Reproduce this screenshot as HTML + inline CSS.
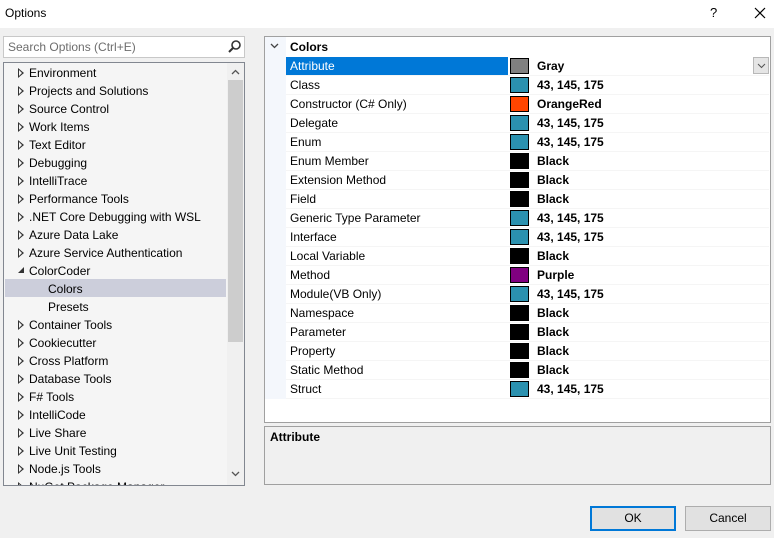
<!DOCTYPE html>
<html><head><style>
*{margin:0;padding:0;box-sizing:border-box}
body{width:774px;height:538px;background:#f0f0f0;font-family:"Liberation Sans",sans-serif;font-size:12px;color:#000;position:relative;overflow:hidden}
.a{position:absolute}
.tb{left:0;top:0;width:774px;height:28px;background:#fff}
.tr{position:absolute;left:5px;width:221px;height:18px;line-height:18px;white-space:nowrap}
.tri{position:absolute;left:10px;top:4px;width:0;height:0;border-left:6px solid #333;border-top:5px solid transparent;border-bottom:5px solid transparent}
.tri:after{content:"";position:absolute;left:-5px;top:-3px;border-left:3.5px solid #f5f5f5;border-top:3px solid transparent;border-bottom:3px solid transparent}
.gr{position:absolute;left:286px;width:483px;height:19px;line-height:18px;border-bottom:1px solid #f5f5f5}
.gr .n{position:absolute;left:0;width:222px;padding-left:4px;height:18px}
.gr .s{position:absolute;left:224px;top:1px;width:19px;height:16px;border:1px solid #000}
.gr .v{position:absolute;left:251px;font-weight:bold}
.btn{position:absolute;top:506px;height:25px;width:86px;background:#e1e1e1;border:1px solid #adadad;text-align:center;line-height:23px}
</style></head><body>
<div class="a tb"></div>
<div class="a" style="left:5px;top:6px">Options</div>
<div class="a" style="left:710px;top:5px;font-size:13px">?</div>
<svg class="a" style="left:754px;top:7px" width="12" height="12"><path d="M1 1L11 11M11 1L1 11" stroke="#000" stroke-width="1.2"/></svg>

<div class="a" style="left:3px;top:36px;width:242px;height:22px;background:#fff;border:1px solid #c8c8c8"></div>
<div class="a" style="left:8px;top:40px;color:#6d6d6d">Search Options (Ctrl+E)</div>
<svg class="a" style="left:227px;top:39px" width="15" height="15"><circle cx="9" cy="6" r="4" fill="none" stroke="#333" stroke-width="1.6"/><path d="M6 9L2 13" stroke="#333" stroke-width="2"/></svg>

<div class="a" style="left:3px;top:62px;width:242px;height:424px;background:#f5f5f5;border:1px solid #828790;overflow:hidden">
<div class="a" style="left:223px;top:0;width:17px;height:422px;background:#f0f0f0"></div>
<div class="a" style="left:224px;top:17px;width:15px;height:262px;background:#cdcdcd"></div>
<svg class="a" style="left:227px;top:6px" width="9" height="6"><path d="M1 5L4.5 1.5L8 5" fill="none" stroke="#555" stroke-width="1.3"/></svg>
<svg class="a" style="left:227px;top:408px" width="9" height="6"><path d="M1 1L4.5 4.5L8 1" fill="none" stroke="#555" stroke-width="1.3"/></svg>
<div class="a" style="left:1px;top:216px;width:221px;height:18px;background:#cccedb"></div>
</div>
<div class="a" style="left:3px;top:63px;width:222px;height:422px;overflow:hidden">
<div class="tr" style="top:1px"><i class="tri"></i><span style="margin-left:21px">Environment</span></div>
<div class="tr" style="top:19px"><i class="tri"></i><span style="margin-left:21px">Projects and Solutions</span></div>
<div class="tr" style="top:37px"><i class="tri"></i><span style="margin-left:21px">Source Control</span></div>
<div class="tr" style="top:55px"><i class="tri"></i><span style="margin-left:21px">Work Items</span></div>
<div class="tr" style="top:73px"><i class="tri"></i><span style="margin-left:21px">Text Editor</span></div>
<div class="tr" style="top:91px"><i class="tri"></i><span style="margin-left:21px">Debugging</span></div>
<div class="tr" style="top:109px"><i class="tri"></i><span style="margin-left:21px">IntelliTrace</span></div>
<div class="tr" style="top:127px"><i class="tri"></i><span style="margin-left:21px">Performance Tools</span></div>
<div class="tr" style="top:145px"><i class="tri"></i><span style="margin-left:21px">.NET Core Debugging with WSL</span></div>
<div class="tr" style="top:163px"><i class="tri"></i><span style="margin-left:21px">Azure Data Lake</span></div>
<div class="tr" style="top:181px"><i class="tri"></i><span style="margin-left:21px">Azure Service Authentication</span></div>
<div class="tr" style="top:199px"><svg class="a" style="left:10px;top:5px" width="7" height="7"><path d="M6 0L6 6L0 6Z" fill="#333"/></svg><span style="margin-left:21px">ColorCoder</span></div>
<div class="tr" style="top:217px"><span style="margin-left:40px">Colors</span></div>
<div class="tr" style="top:235px"><span style="margin-left:40px">Presets</span></div>
<div class="tr" style="top:253px"><i class="tri"></i><span style="margin-left:21px">Container Tools</span></div>
<div class="tr" style="top:271px"><i class="tri"></i><span style="margin-left:21px">Cookiecutter</span></div>
<div class="tr" style="top:289px"><i class="tri"></i><span style="margin-left:21px">Cross Platform</span></div>
<div class="tr" style="top:307px"><i class="tri"></i><span style="margin-left:21px">Database Tools</span></div>
<div class="tr" style="top:325px"><i class="tri"></i><span style="margin-left:21px">F# Tools</span></div>
<div class="tr" style="top:343px"><i class="tri"></i><span style="margin-left:21px">IntelliCode</span></div>
<div class="tr" style="top:361px"><i class="tri"></i><span style="margin-left:21px">Live Share</span></div>
<div class="tr" style="top:379px"><i class="tri"></i><span style="margin-left:21px">Live Unit Testing</span></div>
<div class="tr" style="top:397px"><i class="tri"></i><span style="margin-left:21px">Node.js Tools</span></div>
<div class="tr" style="top:415px"><i class="tri"></i><span style="margin-left:21px">NuGet Package Manager</span></div>
</div>

<div class="a" style="left:264px;top:36px;width:507px;height:387px;background:#fff;border:1px solid #a0a0a0"></div>
<div class="a" style="left:265px;top:37px;width:21px;height:362px;background:#f4f7fc"></div>
<svg class="a" style="left:270px;top:43px" width="9" height="6"><path d="M1 1L4.5 4.5L8 1" fill="none" stroke="#444" stroke-width="1.3"/></svg>
<div class="a" style="left:290px;top:40px;font-weight:bold">Colors</div>
<div class="a" style="left:286px;top:57px;width:222px;height:18px;background:#0078d7"></div>
<div class="a" style="left:753px;top:57px;width:16px;height:17px;background:#e5e5e5;border:1px solid #b8b8b8"></div>
<svg class="a" style="left:757px;top:63px" width="9" height="6"><path d="M1 1L4.5 4.5L8 1" fill="none" stroke="#555" stroke-width="1"/></svg>
<div class="gr" style="top:57px"><div class="n" style="color:#fff">Attribute</div><div class="s" style="background:#808080"></div><div class="v">Gray</div></div>
<div class="gr" style="top:76px"><div class="n">Class</div><div class="s" style="background:#2b91af"></div><div class="v">43, 145, 175</div></div>
<div class="gr" style="top:95px"><div class="n">Constructor (C# Only)</div><div class="s" style="background:#ff4500"></div><div class="v">OrangeRed</div></div>
<div class="gr" style="top:114px"><div class="n">Delegate</div><div class="s" style="background:#2b91af"></div><div class="v">43, 145, 175</div></div>
<div class="gr" style="top:133px"><div class="n">Enum</div><div class="s" style="background:#2b91af"></div><div class="v">43, 145, 175</div></div>
<div class="gr" style="top:152px"><div class="n">Enum Member</div><div class="s" style="background:#000"></div><div class="v">Black</div></div>
<div class="gr" style="top:171px"><div class="n">Extension Method</div><div class="s" style="background:#000"></div><div class="v">Black</div></div>
<div class="gr" style="top:190px"><div class="n">Field</div><div class="s" style="background:#000"></div><div class="v">Black</div></div>
<div class="gr" style="top:209px"><div class="n">Generic Type Parameter</div><div class="s" style="background:#2b91af"></div><div class="v">43, 145, 175</div></div>
<div class="gr" style="top:228px"><div class="n">Interface</div><div class="s" style="background:#2b91af"></div><div class="v">43, 145, 175</div></div>
<div class="gr" style="top:247px"><div class="n">Local Variable</div><div class="s" style="background:#000"></div><div class="v">Black</div></div>
<div class="gr" style="top:266px"><div class="n">Method</div><div class="s" style="background:#800080"></div><div class="v">Purple</div></div>
<div class="gr" style="top:285px"><div class="n">Module(VB Only)</div><div class="s" style="background:#2b91af"></div><div class="v">43, 145, 175</div></div>
<div class="gr" style="top:304px"><div class="n">Namespace</div><div class="s" style="background:#000"></div><div class="v">Black</div></div>
<div class="gr" style="top:323px"><div class="n">Parameter</div><div class="s" style="background:#000"></div><div class="v">Black</div></div>
<div class="gr" style="top:342px"><div class="n">Property</div><div class="s" style="background:#000"></div><div class="v">Black</div></div>
<div class="gr" style="top:361px"><div class="n">Static Method</div><div class="s" style="background:#000"></div><div class="v">Black</div></div>
<div class="gr" style="top:380px"><div class="n">Struct</div><div class="s" style="background:#2b91af"></div><div class="v">43, 145, 175</div></div>

<div class="a" style="left:264px;top:426px;width:507px;height:59px;border:1px solid #a0a0a0"></div>
<div class="a" style="left:270px;top:430px;font-weight:bold">Attribute</div>

<div class="btn" style="left:590px;border:2px solid #0078d7;line-height:21px">OK</div>
<div class="btn" style="left:685px">Cancel</div>
</body></html>
